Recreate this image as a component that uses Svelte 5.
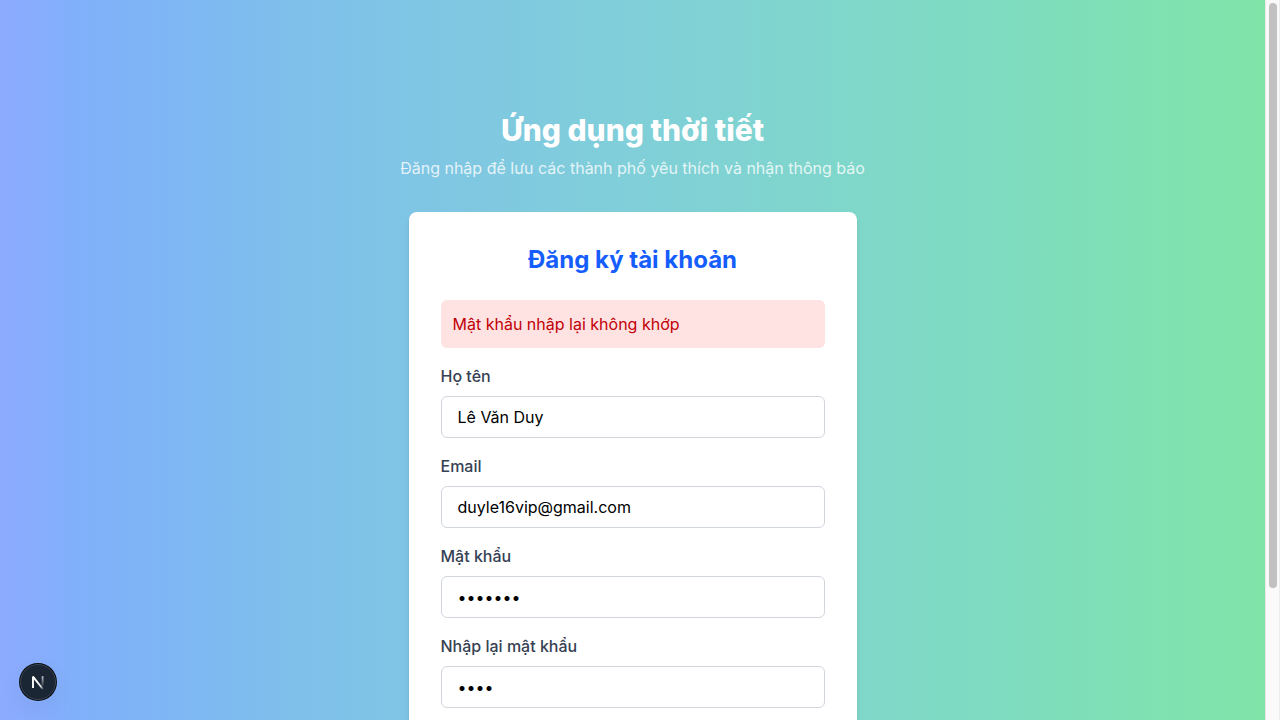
<script>
  let name = $state('Lê Văn Duy');
  let email = $state('duyle16vip@gmail.com');
  let password = $state('1234567');
  let confirm = $state('1234');
</script>

<div class="shell">
  <main>
    <header>
      <h1>Ứng dụng thời tiết</h1>
      <p>Đăng nhập để lưu các thành phố yêu thích và nhận thông báo</p>
    </header>

    <section class="card">
      <h2>Đăng ký tài khoản</h2>
      <div class="alert" role="alert">Mật khẩu nhập lại không khớp</div>
      <form>
        <div class="field">
          <label for="name">Họ tên</label>
          <input id="name" type="text" bind:value={name} />
        </div>
        <div class="field">
          <label for="email">Email</label>
          <input id="email" type="email" bind:value={email} />
        </div>
        <div class="field">
          <label for="password">Mật khẩu</label>
          <input id="password" type="password" autocomplete="new-password" bind:value={password} />
        </div>
        <div class="field">
          <label for="confirm">Nhập lại mật khẩu</label>
          <input id="confirm" type="password" autocomplete="new-password" bind:value={confirm} />
        </div>
      </form>
    </section>
  </main>

  <div class="track"><div class="thumb"></div></div>

  <button class="devtools" type="button">
    <svg width="40" height="40" viewBox="0 0 40 40" fill="none" aria-hidden="true">
      <defs>
        <linearGradient id="diag" x1="20" y1="19" x2="26" y2="27" gradientUnits="userSpaceOnUse">
          <stop stop-color="#fff" />
          <stop offset="0.6" stop-color="#fff" stop-opacity="0.85" />
          <stop offset="1" stop-color="#fff" stop-opacity="0.1" />
        </linearGradient>
        <linearGradient id="stem" x1="24" y1="14" x2="24" y2="24" gradientUnits="userSpaceOnUse">
          <stop stop-color="#fff" stop-opacity="0.75" />
          <stop offset="1" stop-color="#fff" stop-opacity="0.1" />
        </linearGradient>
      </defs>
      <circle cx="20" cy="20" r="19" fill="#090b0e" />
      <circle cx="20" cy="20" r="17.5" fill="#1b2635" stroke="#3c4652" />
      <path d="M15 26V14.4" stroke="#fff" stroke-width="1.9" />
      <path d="M15 14.6L24.8 27" stroke="url(#diag)" stroke-width="1.9" />
      <path d="M24.6 14.2V24" stroke="url(#stem)" stroke-width="1.8" />
    </svg>
  </button>
</div>

<style>
  :global(body) {
    margin: 0;
  }

  .shell {
    display: grid;
    grid-template-columns: 1fr 15px;
    height: 100vh;
    overflow: hidden;
    font-family: Inter, sans-serif;
    font-size: 16px;
    line-height: 24px;
  }

  main {
    display: flex;
    flex-direction: column;
    align-items: center;
    gap: 32px;
    min-height: 0;
    padding: 112px 16px;
    box-sizing: border-box;
    overflow-y: auto;
    scrollbar-width: none;
    background: linear-gradient(
      to right,
      #8caaff 0%,
      #8aacfe 2%,
      #80b0f9 6%,
      #7eb5f6 12%,
      #7fc0ea 24%,
      #80cfd9 50%,
      #7fdcc0 79%,
      #80e4a8 100%
    );
  }

  header {
    display: flex;
    flex-direction: column;
    gap: 8px;
    text-align: center;
  }

  h1,
  h2,
  p {
    margin: 0;
  }

  h1 {
    font-size: 30px;
    line-height: 36px;
    font-weight: 800;
    color: #fff;
  }

  p {
    color: rgba(255, 255, 255, 0.8);
  }

  .card {
    flex-shrink: 0;
    width: 100%;
    max-width: 448px;
    box-sizing: border-box;
    padding: 32px;
    border-radius: 8px;
    background: #fff;
    box-shadow: 0 4px 6px -1px rgba(0, 0, 0, 0.1), 0 2px 4px -2px rgba(0, 0, 0, 0.1);
  }

  h2 {
    margin-bottom: 24px;
    font-size: 24px;
    line-height: 32px;
    font-weight: 700;
    text-align: center;
    color: #155dfc;
  }

  .alert {
    margin-bottom: 16px;
    padding: 12px;
    border-radius: 6px;
    background: #ffe2e2;
    color: #c10007;
  }

  form {
    display: flex;
    flex-direction: column;
    gap: 16px;
  }

  .field {
    display: flex;
    flex-direction: column;
    gap: 8px;
  }

  label {
    font-weight: 500;
    color: #364153;
  }

  input {
    box-sizing: border-box;
    width: 100%;
    height: 42px;
    padding: 8px 16px;
    border: 1px solid #d1d5dc;
    border-radius: 6px;
    background: #fff;
    font: inherit;
    color: #000;
  }

  .track {
    padding: 3px;
    border-left: 1px solid #e8e8e8;
    border-right: 1px solid #ededed;
    box-sizing: border-box;
    background: #fafafa;
  }

  .thumb {
    width: 8px;
    height: 82%;
    margin: 0 auto;
    border-radius: 4px;
    background: #c1c1c1;
  }

  .devtools {
    position: fixed;
    left: 18px;
    bottom: 18px;
    display: flex;
    padding: 0;
    border: 0;
    border-radius: 50%;
    background: none;
    box-shadow: 0 8px 24px -4px rgba(0, 0, 0, 0.08);
  }
</style>
